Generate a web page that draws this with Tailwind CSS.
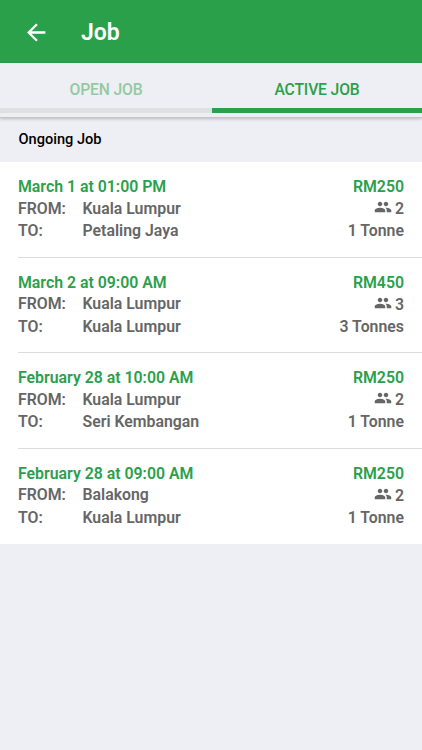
<!DOCTYPE html>
<html lang="en">
<head>
<meta charset="utf-8">
<title>Job</title>
<script src="https://cdn.jsdelivr.net/npm/@tailwindcss/browser@4"></script>
</head>
<body class="h-[750px] overflow-hidden bg-[#eeeff4] font-['Roboto',sans-serif]">
<header class="flex h-[63px] items-center bg-[#2aa04a] pl-[27px] text-white">
  <svg class="mt-px h-[19px] w-[19px]" viewBox="0 0 19 19" fill="none" stroke="currentColor" stroke-width="2.3"><path d="M18.4 9.5H2M10 1.2L1.7 9.5L10 17.8"/></svg>
  <h1 class="ml-[35px] mt-[2px] text-[23px] font-semibold leading-7">Job</h1>
</header>
<nav class="flex h-[55px] border-b border-[#c4c5c9] pb-1 text-[15.7px] font-medium tracking-[-0.01em] shadow-[0_1px_3px_rgba(0,0,0,0.22)]">
  <div class="flex h-[50px] w-[212px] items-center justify-center border-b-[5px] border-[#dfe0e4] pt-[9px] text-[#93c9a3]">OPEN JOB</div>
  <div class="flex h-[50px] w-[210px] items-center justify-center border-b-[5px] border-[#2aa04a] pt-[9px] text-[#2aa04a]">ACTIVE JOB</div>
</nav>
<h2 class="flex h-[44px] items-center pl-[18.500px] text-[14.6px] font-medium text-black">Ongoing Job</h2>
<main id="jobs" class="h-[382px] bg-white"></main>
<template id="row">
  <article class="ml-[18px] h-[95.67px] border-[#dcdcde] pr-[18px] pt-[14px] text-[15.85px] font-semibold leading-[22px] text-[#666] not-last:border-b">
    <div class="flex justify-between text-[#2aa04a]"><span data-k="date"></span><span data-k="price"></span></div>
    <div class="flex"><span class="relative -top-[0.5px] w-[64.5px]">FROM:</span><span class="relative -top-[0.5px]" data-k="from"></span>
      <span class="ml-auto flex items-center"><svg class="mr-[3px] -mt-[4px] h-[18px] w-[18px]" viewBox="0 0 24 24" fill="currentColor"><path d="M16 11c1.66 0 2.99-1.34 2.99-3S17.66 5 16 5s-3 1.34-3 3 1.34 3 3 3zm-8 0c1.66 0 2.99-1.34 2.99-3S9.66 5 8 5 5 6.340 5 8s1.340 3 3 3zm0 2c-2.330 0-7 1.170-7 3.500V19h14v-2.500c0-2.330-4.670-3.500-7-3.500zm8 0c-.29 0-.62.02-.97.05 1.160.84 1.970 1.970 1.970 3.450V19h6v-2.500c0-2.330-4.670-3.500-7-3.500z"/></svg><span data-k="people"></span></span></div>
    <div class="flex"><span class="w-[64.5px]">TO:</span><span data-k="to"></span><span class="ml-auto" data-k="load"></span></div>
  </article>
</template>
<script>
const jobs = [
  {date:'March 1 at 01:00 PM', price:'RM250', from:'Kuala Lumpur', people:'2', to:'Petaling Jaya', load:'1 Tonne'},
  {date:'March 2 at 09:00 AM', price:'RM450', from:'Kuala Lumpur', people:'3', to:'Kuala Lumpur', load:'3 Tonnes'},
  {date:'February 28 at 10:00 AM', price:'RM250', from:'Kuala Lumpur', people:'2', to:'Seri Kembangan', load:'1 Tonne'},
  {date:'February 28 at 09:00 AM', price:'RM250', from:'Balakong', people:'2', to:'Kuala Lumpur', load:'1 Tonne'}
];
for (const j of jobs) {
  const n = document.getElementById('row').content.cloneNode(true);
  n.querySelectorAll('[data-k]').forEach(e => e.textContent = j[e.dataset.k]);
  document.getElementById('jobs').append(n);
}
</script>
</body>
</html>
